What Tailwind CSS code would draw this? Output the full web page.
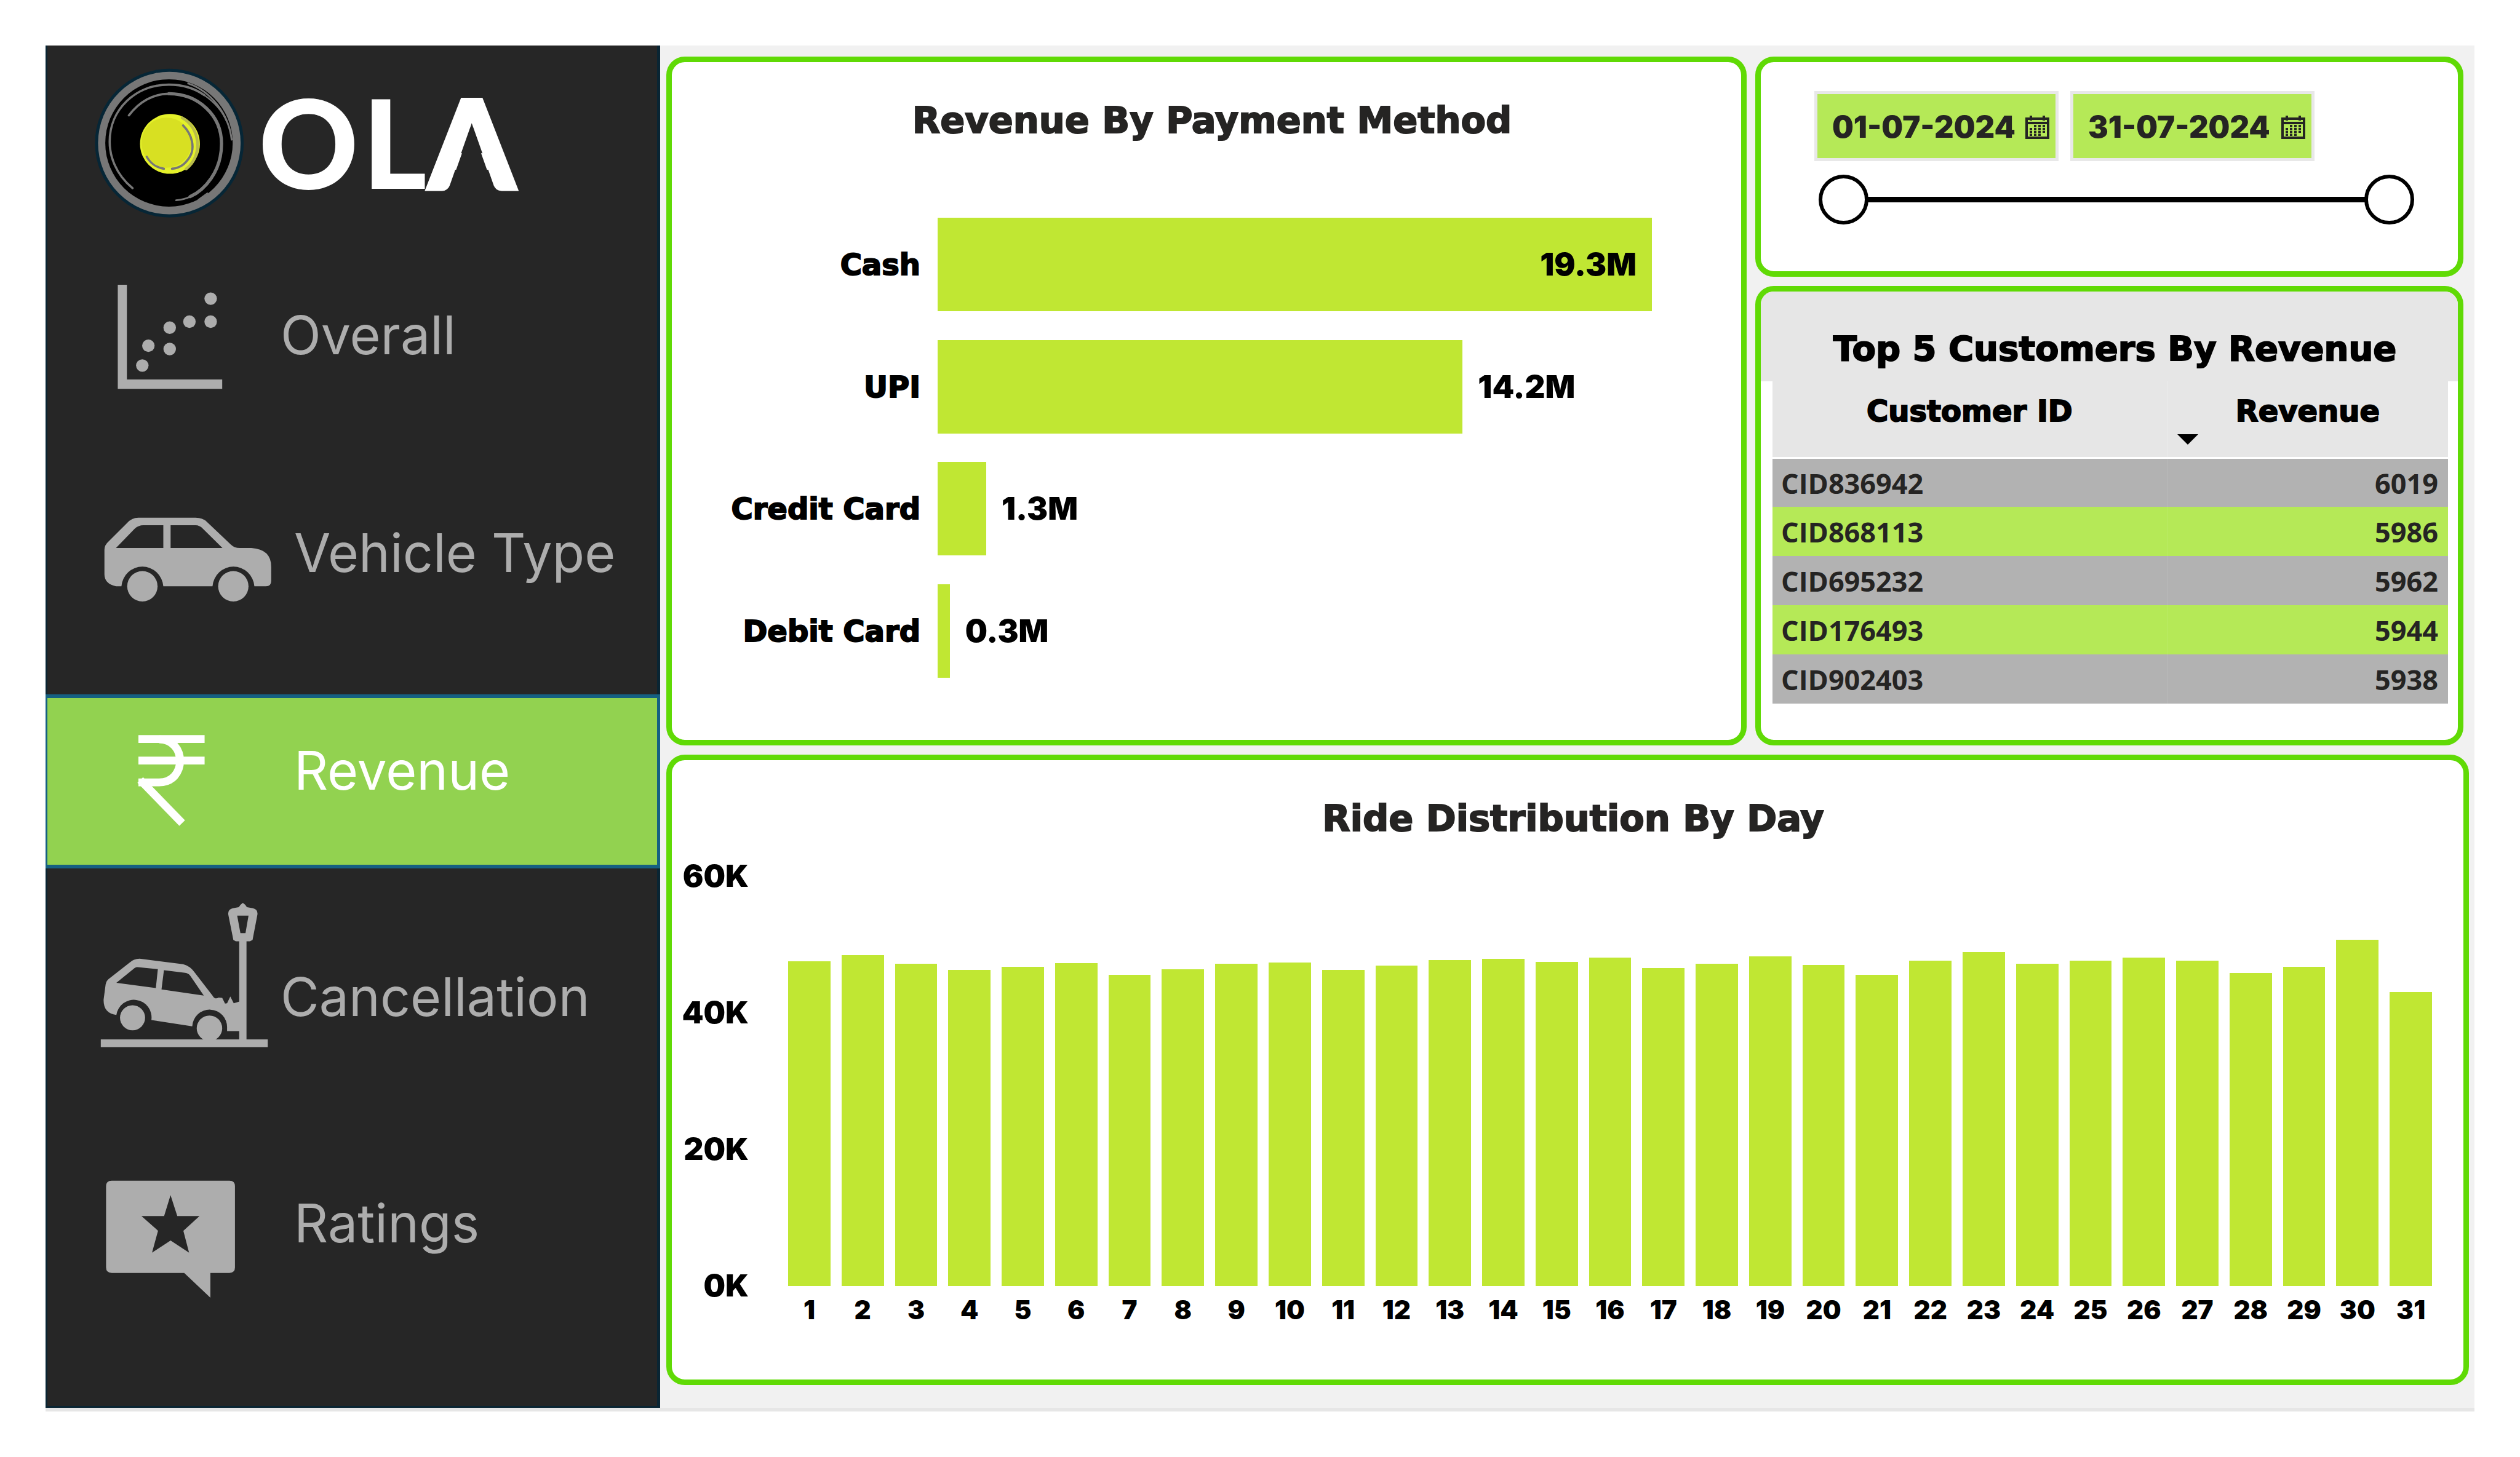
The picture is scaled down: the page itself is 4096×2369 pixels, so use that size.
<!DOCTYPE html>
<html lang="en">
<head>
<meta charset="utf-8">
<meta name="viewport" content="width=device-width, initial-scale=1">
<title>OLA Dashboard - Revenue</title>
<script src="https://cdn.jsdelivr.net/npm/@tailwindcss/browser@4"></script>
</head>
<body class="bg-white font-['Inter',sans-serif]">
<div class="flex min-h-screen flex-col p-[74px]">
  <div class="flex flex-1 border-b-[6px] border-[#e6e6e6] bg-[#f1f1f1]">

    <aside class="w-[999px] shrink-0 border-r-[5px] border-b-[3px] border-l-[3px] border-[#0a2533] bg-[#262626]">
      <header class="pt-[34px] pb-[65px] pl-[73px]">
        <svg class="h-[248px] w-[720px]" viewBox="152 109.4 730 251.3" role="img" aria-label="OLA">
          <circle cx="279" cy="235.7" r="122.5" fill="#062636"/>
          <circle cx="279" cy="235.7" r="117.5" fill="#777"/>
          <circle cx="278.4" cy="235.5" r="105" fill="#000"/>
          <g transform="translate(140 100) scale(.33333)" fill="none" stroke="#777" stroke-linecap="round">
            <path d="M235 630C150 560 122 470 122 400C122 240 250 118 415 118C475 118 540 135 590 170" stroke-width="11"/>
            <path d="M510 112C620 150 710 260 725 390" stroke-width="9"/>
            <path d="M590 170C640 205 680 250 700 300" stroke-width="7"/>
            <path d="M217 270C270 200 340 163 415 163" stroke-width="11"/>
            <path d="M415 163C560 163 675 270 675 410C675 550 590 640 520 672" stroke-width="16"/>
            <path d="M520 672C500 682 475 688 450 690" stroke-width="8"/>
            <path d="M560 688L605 655" stroke-width="7"/>
            <circle cx="420" cy="411" r="148" fill="#e4f12a" stroke="none"/>
            <path d="M480 282C570 330 585 470 500 535" stroke="#b9bd4a" stroke-width="14"/>
            <circle cx="403" cy="405" r="124" fill="#d8e022" stroke="none"/>
            <path d="M485 320C530 365 545 430 518 475C495 512 470 530 430 534M305 475C325 510 350 527 390 534" stroke-width="11"/>
          </g>
          <text y="311.5" font-family="Lato, sans-serif" font-weight="900" font-size="203" fill="#fff"><tspan x="426">O</tspan><tspan x="597">L</tspan><tspan x="706" stroke="#fff" stroke-width="6">A</tspan></text>
          <path d="M777 208L816 318H738Z" fill="#262626"/>
        </svg>
      </header>

      <nav class="flex flex-col gap-[71px] text-[86px] leading-[100px] text-[#adadad]">
        <a href="#overall" class="flex h-[283px] items-center pb-9 pl-[73px]">
          <svg class="h-[240px] w-[300px] overflow-visible" viewBox="152 430.4 304 243.2" fill="currentColor" aria-hidden="true">
            <path d="M194 469H209V625H366V640.5H194Z"/>
            <circle cx="347" cy="491.8" r="10.3"/><circle cx="312" cy="529.7" r="10.3"/><circle cx="347" cy="529.7" r="10.3"/>
            <circle cx="279.5" cy="539.6" r="10.3"/><circle cx="244.4" cy="569.3" r="10.3"/><circle cx="279.5" cy="574.8" r="10.3"/>
            <circle cx="234.4" cy="602" r="10.3"/>
          </svg>
          <span class="ml-[6px]">Overall</span>
        </a>
        <a href="#vehicle" class="flex h-[283px] items-center pb-9 pl-[73px]">
          <svg class="h-[240px] w-[300px] overflow-visible" viewBox="152 789.4 304 243.2" fill="currentColor" aria-hidden="true">
            <path fill-rule="evenodd" d="M228 853H322Q334 853 341 860L380 897Q386 903 395 903H414Q446.7 905 446.7 934V957Q446.7 966 438 966H419A34.6 35 0 0 0 350 966H269A34.6 35 0 0 0 200 966H191Q172 962 172 946V906Q172 898 179 892L209 862Q217 853 228 853ZM191 903H269V865.4H236Q228 865.4 222 871ZM281 903H366.4L334 871Q329 865.4 322 865.4H281Z"/>
            <circle cx="234.5" cy="966" r="25"/><circle cx="384.3" cy="966" r="25"/>
          </svg>
          <span class="ml-[28px]">Vehicle Type</span>
        </a>
        <a href="#revenue" aria-current="page" class="-mr-[5px] -ml-[3px] flex h-[283px] items-center border-y-[6px] border-r-[5px] border-l-[3px] border-[#156082] bg-[#92d250] pb-9 pl-[73px] text-white">
          <svg class="h-[240px] w-[300px] overflow-visible" viewBox="152 1149 304 243.2" fill="none" stroke="currentColor" stroke-width="13" aria-hidden="true">
            <path d="M228 1218.5H337M228 1254H337"/>
            <path d="M262 1219C308 1219 308 1290 262 1290H228"/>
            <path d="M231 1286L300 1357"/>
          </svg>
          <span class="ml-[28px]">Revenue</span>
        </a>
        <a href="#cancellation" class="mt-[14px] flex h-[283px] items-center pb-9 pl-[73px]">
          <svg class="h-[240px] w-[300px] overflow-visible" viewBox="152 1520.8 304 243.2" fill="currentColor" aria-hidden="true">
            <g transform="translate(150 1460) scale(.33333)">
              <path fill-rule="evenodd" d="M240 358L455 385Q490 393 515 430L600 540Q612 562 630 550L648 552L662 580L672 578L688 545L705 578L733 570V716H672V700A86 86 0 0 0 500 692L298 661A87 87 0 0 0 125 636Q60 628 62 560L72 485Q75 465 95 452L190 378Q210 358 240 358ZM125 477L215 404Q222 400 230 400L330 410L320 503ZM360 415L465 428Q480 430 490 442L557 540L348 510Z"/>
              <circle cx="205" cy="650" r="62"/><circle cx="585" cy="702" r="63"/>
              <path fill-rule="evenodd" d="M738 92L750 82L762 92L770 103L800 109Q825 115 822 140L798 265L785 272H768V757H873V795H48V757H732V272H715L703 265L678 140Q675 115 700 109L730 103ZM722 145H778L763 232H738Z"/>
            </g>
          </svg>
          <span class="ml-[6px]">Cancellation</span>
        </a>
        <a href="#ratings" class="mt-[14px] flex h-[283px] items-center pb-9 pl-[73px]">
          <svg class="h-[240px] w-[300px] overflow-visible" viewBox="152 1895.7 304 243.2" fill="currentColor" aria-hidden="true">
            <path fill-rule="evenodd" d="M184 1947H378Q387 1947 387 1956V2090Q387 2099 378 2099H346.5V2140L303.4 2099H184Q174.7 2099 174.7 2090V1956Q174.7 1947 184 1947ZM280.9 1971L270.3 2005.4H233L260.3 2029.6L250.4 2065.7L281 2045.6L311.4 2065.7L302 2029.6L328.6 2005.4H292Z"/>
          </svg>
          <span class="ml-[28px]">Ratings</span>
        </a>
      </nav>
    </aside>

    <main class="flex min-w-0 flex-1 flex-col gap-[15px] pt-[18px] pr-[9px] pb-[37px] pl-[10px]">
      <div class="grid grid-cols-[1756fr_1151fr] gap-[14px] pr-[9px]">

        <section class="rounded-[30px] border-[9px] border-[#60da05] bg-white pt-[59px] pb-[101px]">
          <h2 class="pl-[18px] text-center font-['DejaVu_Sans',sans-serif] text-[59px] leading-[72px] font-bold text-[#252423] [-webkit-text-stroke:2px]">Revenue By Payment Method</h2>
          <div id="payments" class="mt-[122px] flex h-[748px] flex-col justify-between text-[51px] leading-[60px] font-black text-black"></div>
        </section>

        <div class="flex flex-col gap-[15px]">
          <section class="rounded-[30px] border-[9px] border-[#60da05] bg-white pt-[47px] pr-[71px] pb-[76px] pl-[87px]">
            <div class="flex gap-[19px] text-[49px] font-black text-[#252423]">
              <div class="flex h-[114px] w-[397px] items-center border-[5px] border-[#e8e8e8] bg-[#b5e957] pt-[3px] pr-[10px] pl-6">
                <input type="text" aria-label="Start date" value="01-07-2024" class="min-w-0 flex-1">
                <button type="button" aria-label="Open start calendar"><svg class="h-[38px] w-[39px]" viewBox="0 0 39 38" fill="#252423" aria-hidden="true"><use href="#cal"/></svg></button>
              </div>
              <div class="flex h-[114px] w-[397px] items-center border-[5px] border-[#e8e8e8] bg-[#b5e957] pt-[3px] pr-[10px] pl-6">
                <input type="text" aria-label="End date" value="31-07-2024" class="min-w-0 flex-1">
                <button type="button" aria-label="Open end calendar"><svg class="h-[38px] w-[39px]" viewBox="0 0 39 38" fill="#252423" aria-hidden="true"><use href="#cal"/></svg></button>
              </div>
            </div>
            <div class="relative mt-[22px] ml-[7px] flex h-[81px] items-center">
              <div class="mx-10 h-[9px] flex-1 bg-black"></div>
              <input type="range" min="1" max="31" value="1" aria-label="From day" class="pointer-events-none absolute inset-0 h-full w-full appearance-none bg-transparent [&::-webkit-slider-thumb]:pointer-events-auto [&::-webkit-slider-thumb]:size-[81px] [&::-webkit-slider-thumb]:appearance-none [&::-webkit-slider-thumb]:rounded-full [&::-webkit-slider-thumb]:border-[6px] [&::-webkit-slider-thumb]:border-black [&::-webkit-slider-thumb]:bg-white">
              <input type="range" min="1" max="31" value="31" aria-label="To day" class="pointer-events-none absolute inset-0 h-full w-full appearance-none bg-transparent [&::-webkit-slider-thumb]:pointer-events-auto [&::-webkit-slider-thumb]:size-[81px] [&::-webkit-slider-thumb]:appearance-none [&::-webkit-slider-thumb]:rounded-full [&::-webkit-slider-thumb]:border-[6px] [&::-webkit-slider-thumb]:border-black [&::-webkit-slider-thumb]:bg-white">
            </div>
          </section>

          <section class="flex-1 overflow-hidden rounded-[30px] border-[9px] border-[#60da05] bg-white">
            <h2 class="bg-[#e6e6e6] pt-[57px] pb-[17px] pl-[18px] text-center font-['DejaVu_Sans',sans-serif] text-[56px] leading-[72px] font-bold text-black [-webkit-text-stroke:2px]">Top 5 Customers By Revenue</h2>
            <div class="pr-4 pl-[19px]">
              <table class="w-full table-fixed border-collapse">
                <colgroup><col class="w-[58.4%]"><col></colgroup>
                <thead class="bg-[#e6e6e6] font-['DejaVu_Sans',sans-serif] text-[48px] leading-[60px] text-black">
                  <tr class="border-b-[3px] border-white">
                    <th class="h-[124px] border-r border-white/30 pt-[18px] align-top font-bold [-webkit-text-stroke:2px]">Customer ID</th>
                    <th class="h-[124px] pt-[18px] align-top font-bold [-webkit-text-stroke:2px]" aria-sort="descending">Revenue
                      <svg class="mt-2 ml-4 block h-[17px] w-[34px]" viewBox="0 0 34 17" aria-hidden="true"><path d="M0 0H34L17 17Z"/></svg>
                    </th>
                  </tr>
                </thead>
                <tbody id="customers" class="font-['Open_Sans',sans-serif] text-[45px] leading-[60px] font-bold text-[#252423]"></tbody>
              </table>
            </div>
          </section>
        </div>
      </div>

      <section class="flex-1 rounded-[30px] border-[9px] border-[#60da05] bg-white pt-[59px] pb-[88px]">
        <h2 class="pl-[18px] text-center font-['DejaVu_Sans',sans-serif] text-[59px] leading-[72px] font-bold text-[#252423] [-webkit-text-stroke:2px]">Ride Distribution By Day</h2>
        <div class="mt-[57px] flex h-[667px] font-black text-black">
          <div class="mr-16 flex w-[125px] flex-col justify-between text-right text-[50px]">
            <div class="flex h-0 items-center justify-end">60K</div>
            <div class="flex h-0 items-center justify-end">40K</div>
            <div class="flex h-0 items-center justify-end">20K</div>
            <div class="flex h-0 items-center justify-end">0K</div>
          </div>
          <div id="bars" class="mr-[51px] grid flex-1 grid-cols-31 items-end gap-[18px]"></div>
        </div>
        <div id="days" class="mt-[14px] mr-[51px] ml-[189px] grid grid-cols-31 gap-[18px] text-[42px] leading-[50px] font-black text-black"></div>
      </section>
    </main>
  </div>
</div>

<svg class="hidden" aria-hidden="true">
  <symbol id="cal" viewBox="0 0 39 38">
    <path fill-rule="evenodd" d="M0 3H7V0H11V3H28V0H32V3H39V38H0ZM4 7V10H35V7H32V8H28V7H11V8H7V7ZM4 14V34H35V14Z"/>
    <path d="M14 15h4v4h-4zM21 15h4v4h-4zM28 15h4v4h-4zM7 20h4v4H7zM14 20h4v4h-4zM21 20h4v4h-4zM28 20h4v4h-4zM7 25h4v4H7zM14 25h4v4h-4zM21 25h4v4h-4zM28 25h4v3h-4zM7 30h4v3H7zM14 30h4v3h-4zM21 30h4v3h-4z"/>
  </symbol>
</svg>

<script>
  const payments = [["Cash", 19.3, 100], ["UPI", 14.2, 73.5], ["Credit Card", 1.3, 6.8], ["Debit Card", 0.3, 1.7]];
  document.getElementById("payments").innerHTML = payments.map(([name, value, share]) => {
    const inside = share === 100;
    return `<div class="flex h-[152px] items-center">
      <span class="w-[404px] shrink-0 text-right font-['DejaVu_Sans',sans-serif] text-[48px] font-bold [-webkit-text-stroke:2px]">${name}</span>
      <div class="mr-[145px] ml-7 flex h-full flex-1 items-center">
        <div class="flex h-full shrink-0 items-center justify-end bg-[#c0e733]" style="width:${share}%">${inside ? `<span class="pr-[25px]">${value.toFixed(1)}M</span>` : ""}</div>
        ${inside ? "" : `<span class="pl-[25px]">${value.toFixed(1)}M</span>`}
      </div>
    </div>`;
  }).join("");

  const customers = [["CID836942", 6019], ["CID868113", 5986], ["CID695232", 5962], ["CID176493", 5944], ["CID902403", 5938]];
  document.getElementById("customers").innerHTML = customers.map(([id, revenue]) =>
    `<tr class="h-[80px] odd:bg-[#b2b2b2] even:bg-[#b5e957]"><td class="border-r border-white/10 pt-[2px] pl-[14px]">${id}</td><td class="pt-[2px] pr-4 text-right">${revenue}</td></tr>`).join("");

  const rides = [47.5, 48.4, 47.1, 46.2, 46.7, 47.2, 45.5, 46.3, 47.1, 47.3, 46.2, 46.9, 47.7, 47.85, 47.45, 48, 46.55, 47.1, 48.25, 46.95, 45.5, 47.6, 48.85, 47.1, 47.6, 48, 47.6, 45.75, 46.65, 50.65, 43];
  document.getElementById("bars").innerHTML = rides.map(v => `<div class="bg-[#c0e733]" style="height:${v / 60 * 100}%"></div>`).join("");
  document.getElementById("days").innerHTML = rides.map((_, i) => `<span class="text-center">${i + 1}</span>`).join("");
</script>
</body>
</html>
